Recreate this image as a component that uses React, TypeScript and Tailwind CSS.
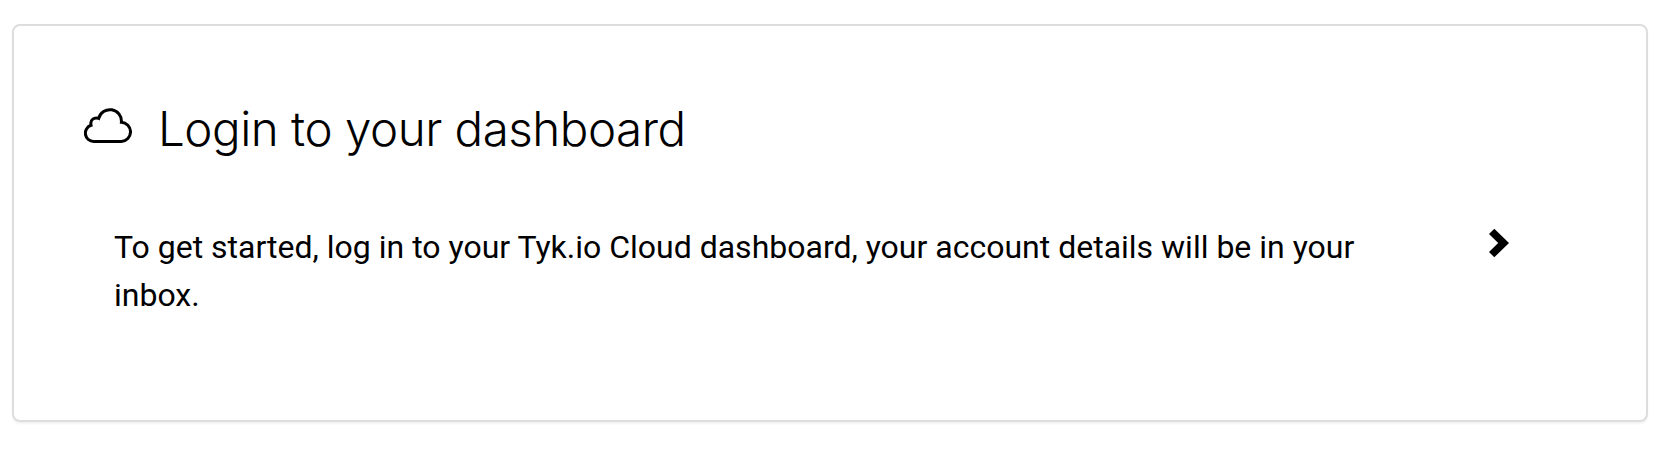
function CloudIcon() {
  return (
    <svg className="mt-[-6px] h-9 w-12 shrink-0" viewBox="0 0 48 36" fill="none" stroke="black" strokeWidth="3">
      <path d="M10 33.4H37.4A9.56 9.56 0 0 0 37.4 14.3A11.55 11.55 0 0 0 14.7 10.4C10.5 8.8 5.6 11.5 7.1 17.3A8.25 8.25 0 0 0 10 33.4Z" />
    </svg>
  );
}

function ChevronIcon() {
  return (
    <svg className="h-[30px] w-5 shrink-0" viewBox="0 0 20 30" fill="black">
      <path d="M5.3 0.7L20 15L5.3 29.3L0 24L9.2 15L0 6Z" />
    </svg>
  );
}

export default function App() {
  return (
    <main className="h-[450px] bg-white pt-6 pl-3 text-black">
      <section className="h-[398px] w-[1636px] rounded-lg border-2 border-[#dddddd] bg-white pt-[68px] pl-[70px] shadow-[0_2px_2px_rgba(0,0,0,0.05)]">
        <div className="flex h-[70px] items-center">
          <CloudIcon />
          <h1 className="ml-[26px] whitespace-nowrap font-['Inter','Liberation_Sans',sans-serif] text-[47.5px] leading-[70px] font-light tracking-[-0.48px]">
            Login to your dashboard
          </h1>
        </div>
        <div className="mt-[59px] flex items-start pl-[30px]">
          <p className="w-[1270px] font-['Roboto',sans-serif] text-[32px] leading-[48px]">
            To get started, log in to your Tyk.io Cloud dashboard, your account details will be in your inbox.
          </p>
          <div className="mt-[5px] ml-[105px]">
            <ChevronIcon />
          </div>
        </div>
      </section>
    </main>
  );
}
